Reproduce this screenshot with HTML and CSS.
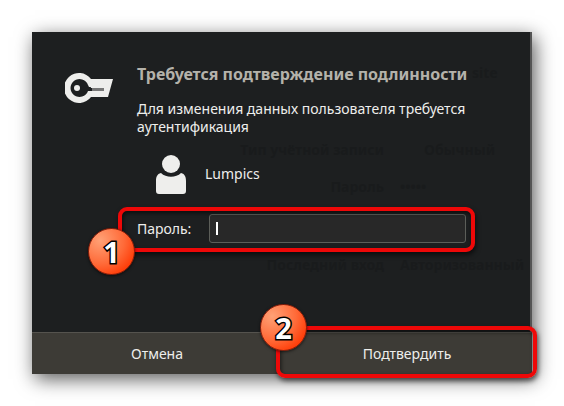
FILE: index.html
```html
<!DOCTYPE html>
<html lang="ru">
<head>
    <meta charset="UTF-8">
    <meta name="viewport" content="width=device-width, initial-scale=1.0">
    <title>Требуется подтверждение подлинности</title>
    <link rel="stylesheet" href="styles.css">
</head>
<body>
    <form class="dialog">
        <!-- window showing through behind the dialog -->
        <div class="behind" aria-hidden="true">
            <span></span><span class="site">site</span>
            <span>Тип учётной записи</span><span class="type">Обычный</span>
            <span>Пароль</span><span>•••••</span>
            <span></span><span></span>
            <span>Последний вход</span><span>Авторизованный</span>
        </div>

        <div class="main">
            <svg class="key" width="48" height="32" viewBox="0 0 48 32" aria-hidden="true">
                <path fill="#eeeeec" d="M26 7H48L43 25H26A15 15 0 1 1 26 7z"/>
                <path fill="#1d1f20" d="M23 13A9 9 0 1 0 23 19H39V15H24z"/>
                <circle cx="12" cy="16" r="3" fill="#eeeeec"/>
                <path fill="#777" d="M27 16h12v3H27z"/>
                <path fill="#eeeeec" d="M25 13h15v3H26z"/>
            </svg>

            <div class="info">
                <h1>Требуется подтверждение подлинности</h1>
                <p>Для изменения данных пользователя требуется аутентификация</p>

                <div class="user">
                    <svg width="30" height="40" viewBox="0 0 30 40" aria-hidden="true">
                        <circle cx="15" cy="10" r="9" fill="#eeeeec"/>
                        <path fill="#eeeeec" d="M5 19c5 5 15 5 20 0 4 1 5 4 5 8v10c0 2-1 3-3 3H3c-2 0-3-1-3-3V27c0-4 1-7 5-8z"/>
                    </svg>
                    <span>Lumpics</span>
                </div>

                <div class="password">
                    <label for="password">Пароль:</label>
                    <div class="field">
                        <input type="password" id="password">
                        <i class="caret"></i>
                    </div>
                    <div class="mark"><b class="num">1</b></div>
                </div>
            </div>
        </div>

        <div class="buttons">
            <button type="button">Отмена</button>
            <div class="confirm">
                <button type="submit">Подтвердить</button>
                <div class="mark"><b class="num">2</b></div>
            </div>
        </div>
    </form>
</body>
</html>
```
FILE: styles.css
```css
*{
    box-sizing: border-box;
    margin: 0;
    padding: 0;
}
body{
    padding: 32px;
    background: #fff;
    color: #eeeeec;
    font: 14px/18px "Noto Sans", "Open Sans", sans-serif;
}
.dialog{
    position: relative;
    background: #1d1f20;
    box-shadow: 3px 5px 18px rgba(0,0,0,.65);
}
.dialog::after{
    content: "";
    position: absolute;
    top: 0;
    right: 0;
    bottom: 42px;
    width: 2px;
    background: #545454;
}
.main{
    position: relative;
    display: flex;
    align-items: flex-start;
    gap: 24px;
    min-height: 300px;
    padding: 32px 32px 32px 33px;
}
.key{
    flex: none;
    margin-top: 8px;
}
.info{
    flex: 1;
}
h1{
    color: #b4b2aa;
    font-size: 16px;
    line-height: 20px;
    white-space: nowrap;
}
p{
    margin-top: 16px;
}
.user{
    display: flex;
    align-items: center;
    gap: 19px;
    margin-top: 18px;
    padding-left: 19px;
}
.password{
    position: relative;
    display: flex;
    align-items: center;
    gap: 18px;
    margin-top: 20px;
    margin-right: 34px;
}
.field{
    position: relative;
    flex: 1;
}
.field input{
    display: block;
    width: 100%;
    height: 29px;
    padding: 0 6px;
    border: 1px solid #5c5e59;
    border-radius: 3px;
    background: #282828;
    color: inherit;
    font: inherit;
    outline: none;
}
.caret{
    position: absolute;
    left: 7px;
    top: 8px;
    width: 2px;
    height: 13px;
    background: #fff;
}
.buttons{
    display: flex;
    border-top: 1px solid #55534e;
    background: #3d3b36;
}
.buttons button{
    width: 100%;
    height: 41px;
    border: 0;
    background: none;
    color: inherit;
    font: inherit;
}
.buttons > *{
    flex: 1;
}
.confirm{
    position: relative;
    z-index: 1;
}

/* red frames with numbers */
.mark{
    position: absolute;
    inset: -7px -9px -9px -19px;
    border: 4px solid #ee0808;
    border-radius: 9px;
    box-shadow: 1px 3px 5px rgba(0,0,0,.6), inset 1px 2px 4px rgba(0,0,0,.6);
    pointer-events: none;
}
.confirm .mark{
    inset: -7px -5px -4px -6px;
}
.num{
    position: absolute;
    left: -34px;
    top: 17px;
    width: 47px;
    height: 47px;
    border: 1px solid #8c1d08;
    border-radius: 50%;
    background: radial-gradient(circle at 25% 25%, #ffa176, #ff6a38 50%, #ff3500 85%);
    box-shadow: 0 1px 3px rgba(0,0,0,.6);
    color: #fff;
    font: bold 29px/45px "Open Sans", sans-serif;
    text-align: center;
    -webkit-text-stroke: 3px #000;
    paint-order: stroke fill;
}
.confirm .num{
    left: -20px;
    top: -26px;
}

/* faint rows of the window below */
.behind{
    position: absolute;
    top: 32px;
    right: 8px;
    display: grid;
    grid-template-columns: auto 124px;
    grid-template-rows: 20px 56px 20px 20px 20px;
    row-gap: 19px;
    column-gap: 16px;
    color: #191b1c;
    font-weight: bold;
    text-align: right;
    white-space: nowrap;
}
.behind span:nth-child(even){
    text-align: left;
}
.behind span:nth-child(3),
.behind .type{
    align-self: end;
}
.behind .type{
    padding-left: 24px;
}
.behind .site{
    padding-left: 72px;
}
```
